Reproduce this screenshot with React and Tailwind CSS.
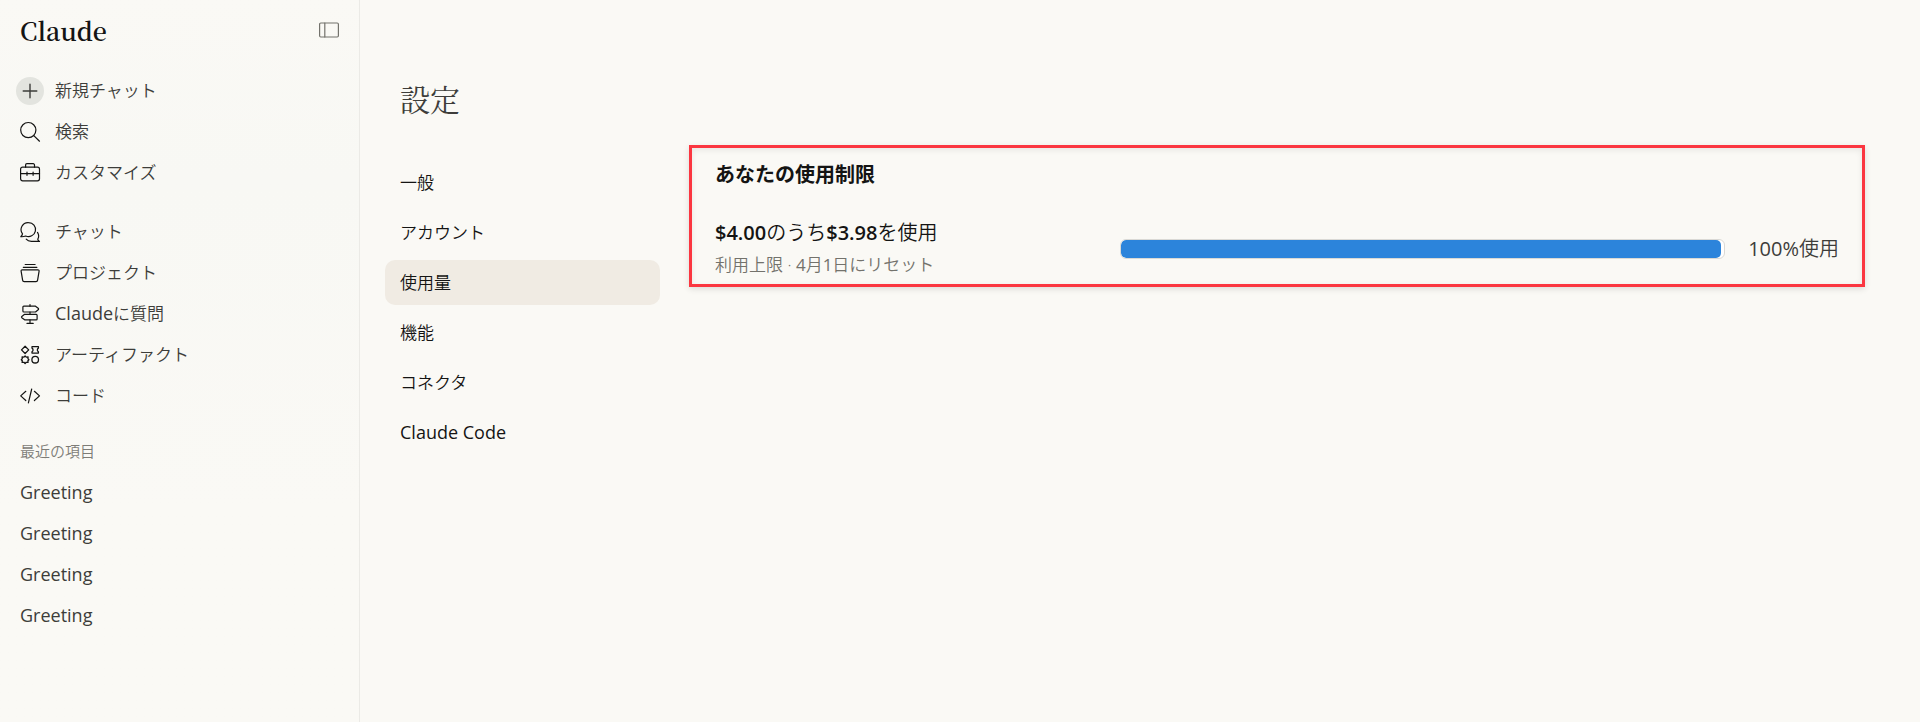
import React from "react";
import clsx from "clsx";

const Icon = ({ children, className, strokeWidth = 1.2 }) => (
  <svg
    viewBox="0 0 20 20"
    fill="none"
    stroke="currentColor"
    strokeWidth={strokeWidth}
    strokeLinecap="round"
    strokeLinejoin="round"
    className={clsx("size-5 overflow-visible", className)}
    aria-hidden="true"
  >
    {children}
  </svg>
);

const PlusIcon = () => (
  <Icon className="text-[#3d3d3a]" strokeWidth={1.4}>
    <path d="M10 3.2v13.6M3.2 10h13.6" />
  </Icon>
);

const SearchIcon = () => (
  <Icon>
    <circle cx="8.3" cy="8.1" r="7.6" />
    <path d="M13.8 13.6l5.7 5.6" />
  </Icon>
);

const ToolboxIcon = () => (
  <Icon>
    <rect x="0.6" y="4.2" width="18.9" height="13.6" rx="2" />
    <path d="M5.6 4.2V2a1.3 1.3 0 0 1 1.3-1.3h6.3a1.3 1.3 0 0 1 1.3 1.3v2.2" />
    <path d="M0.6 10.7h18.9M7 9.1v3.2M13.1 9.1v3.2" />
  </Icon>
);

const ChatsIcon = () => (
  <Icon>
    <path d="M8.6 0.6a7 7 0 1 1-2.9 13.4c-1.4.6-3.2.8-4.9.7 1-1 1.5-1.9 1.7-2.9A7 7 0 0 1 8.6 0.6z" />
    <path d="M6.2 17.2c1.2 1.5 3.1 2.2 5.2 2.2h8.1c-1-.6-1.6-1.3-1.8-2.2 1-1.6 1.2-4.6-.2-6.8" />
  </Icon>
);

const ProjectsIcon = () => (
  <Icon>
    <path d="M5.2 1.5h9.9M3.3 4.3h13.6" />
    <path d="M2.2 6.8h15.7c.8 0 1.3.6 1.2 1.3l-1.5 9c-.1.9-.8 1.5-1.6 1.5H4.2c-.8 0-1.5-.6-1.6-1.5l-1.5-9c-.1-.7.4-1.3 1.1-1.3z" />
  </Icon>
);

const SignpostIcon = () => (
  <Icon>
    <path d="M10 0.5v1.7M10 8v2.3M10 15.8v3.6M7 19.4h6.2" />
    <path d="M3.8 2.2h11.7l2.7 2.1c.5.4.5 1 0 1.4L15.5 8H3.800a.9.9 0 0 1-.9-.9v-4c0-.5.4-.9.9-.9z" />
    <path d="M16.2 10.3H4.6l-2.8 2.1c-.4.4-.4.9 0 1.3l2.8 2.1h11.6c.5 0 .9-.4.9-.9v-3.700c0-.5-.4-.9-.9-.9z" />
  </Icon>
);

const ArtifactsIcon = () => (
  <Icon strokeWidth={1.3}>
    <path d="M5.1 1.3l3.6 3.6-3.6 3.6-3.6-3.6z" />
    <path d="M12 1.7h6.4v1.4c-1.4 1-1.4 2.7 0 3.7v1.3H12V6.8c1.4-1 1.4-2.7 0-3.7z" />
    <path d="M5.1 10.9l1.1 1.2 1.9-.1-.2 1.6 1 1.1-1 1.1.2 1.6-1.9-.1-1.1 1.2L4 17.3l-1.9.1.2-1.6-1-1.1 1-1.1-.2-1.6 1.9.1z" />
    <circle cx="15.2" cy="14.7" r="3.3" />
  </Icon>
);

const CodeIcon = () => (
  <Icon>
    <path d="M5.8 5.3L0.7 9.9l5.1 4.6M14.4 5.3l5.1 4.6-5.1 4.6M11.7 3L8.4 16.9" />
  </Icon>
);

const SidebarIcon = () => (
  <Icon className="text-[#73726c]">
    <rect x="0.6" y="3" width="18.8" height="14" rx="1.2" />
    <path d="M5.8 3v14" />
  </Icon>
);

const primaryLinks = [
  { label: "新規チャット", icon: PlusIcon, round: true },
  { label: "検索", icon: SearchIcon },
  { label: "カスタマイズ", icon: ToolboxIcon },
];

const secondaryLinks = [
  { label: "チャット", icon: ChatsIcon },
  { label: "プロジェクト", icon: ProjectsIcon },
  { latin: "Claude", label: "に質問", icon: SignpostIcon },
  { label: "アーティファクト", icon: ArtifactsIcon },
  { label: "コード", icon: CodeIcon },
];

const recents = ["Greeting", "Greeting", "Greeting", "Greeting"];

const settingsTabs = [
  { label: "一般" },
  { label: "アカウント" },
  { label: "使用量", active: true },
  { label: "機能" },
  { label: "コネクタ" },
  { label: "Claude Code", latin: true },
];

const NavList = ({ items }) => (
  <ul>
    {items.map(({ label, latin, icon: ItemIcon, round }) => (
      <li key={label}>
        <a href="#" className="flex h-[41px] items-center gap-[11px] px-4">
          <span
            className={clsx(
              "flex size-7 shrink-0 items-center justify-center rounded-full text-[#141413]",
              round && "bg-[#e3e4df]"
            )}
          >
            <ItemIcon />
          </span>
          <span>
            {latin && (
              <span className="text-[18px] leading-5 font-normal">{latin}</span>
            )}
            {label}
          </span>
        </a>
      </li>
    ))}
  </ul>
);

const Sidebar = () => (
  <aside className="w-[360px] shrink-0 border-r border-[#ebeae6] bg-linear-to-b from-[#faf9f5] via-[#f8f8f4] via-25% to-[#faf9f5] to-70% text-[17px] text-[#3d3d3a]">
    <div className="flex h-[60px] items-center justify-between px-5">
      <a
        href="#"
        className="font-['Noto_Serif_CJK_JP',serif] text-[25px] leading-8 font-semibold text-[#141413]"
      >
        Claude
      </a>
      <button type="button" aria-label="サイドバーを閉じる">
        <SidebarIcon />
      </button>
    </div>
    <nav className="flex flex-col gap-[18px] pt-[10px]">
      <NavList items={primaryLinks} />
      <NavList items={secondaryLinks} />
    </nav>
    <h2 className="px-5 pt-[25px] pb-[11px] text-[15px] leading-5 text-[#7d7c77]">
      最近の項目
    </h2>
    <ul>
      {recents.map((title, i) => (
        <li key={i}>
          <a
            href="#"
            className="flex h-[41px] items-center px-5 text-[18px] font-normal"
          >
            {title}
          </a>
        </li>
      ))}
    </ul>
  </aside>
);

const UsageCard = ({ used, limit }) => (
  <section className="min-w-0 flex-1 self-start border-[3px] border-[#fb3640] px-[23px] pt-[15px] pb-[3px] shadow-[0_2px_6px_rgba(0,0,0,0.12),inset_0_2px_6px_rgba(0,0,0,0.08)]">
    <h2 className="text-[20px] leading-6 font-bold">あなたの使用制限</h2>
    <div className="mt-[30px] flex items-center gap-[23px]">
      <div className="w-[382px]">
        <p className="text-[20px] leading-8">
          <span className="font-semibold">${limit.toFixed(2)}</span>のうち
          <span className="font-semibold">${used.toFixed(2)}</span>を使用
        </p>
        <p className="text-[17px] leading-8 text-[#73726c]">
          利用上限 · <span className="font-normal">4</span>月
          <span className="font-normal">1</span>日にリセット
        </p>
      </div>
      <div
        role="progressbar"
        aria-label="使用量"
        aria-valuenow={used}
        aria-valuemax={limit}
        className="h-5 flex-1 overflow-hidden rounded-md border border-[#dad9d5] bg-white"
      >
        <div
          className="h-full rounded-[5px] bg-[#2c84db]"
          style={{ width: `${(used / limit) * 100}%` }}
        />
      </div>
      <p className="text-[20px] text-[#3d3d3a]">
        <span className="font-normal">100%</span>使用
      </p>
    </div>
  </section>
);

const App = () => (
  <div className="flex min-h-screen bg-[#faf9f5] font-['Open_Sans','Noto_Sans_CJK_JP',sans-serif] font-[350] text-[#141413]">
    <Sidebar />
    <main className="min-w-0 flex-1 pt-[78px] pr-[55px] pl-[25px]">
      <h1 className="px-[15px] font-['Noto_Serif_CJK_JP','Noto_Sans_CJK_JP',serif] text-[30px] leading-10 font-normal text-[#3d3d3a]">
        設定
      </h1>
      <div className="mt-[27px] flex gap-[29px]">
        <nav className="flex w-[275px] shrink-0 flex-col gap-[5px] pt-[15px]">
          {settingsTabs.map(({ label, active, latin }) => (
            <a
              key={label}
              href="#"
              className={clsx(
                "flex h-[45px] items-center rounded-[10px] px-[15px]",
                latin ? "text-[18px] font-medium" : "text-[17px]",
                active && "bg-[#f0ebe3]"
              )}
            >
              {label}
            </a>
          ))}
        </nav>
        <UsageCard used={3.98} limit={4} />
      </div>
    </main>
  </div>
);

export default App;
